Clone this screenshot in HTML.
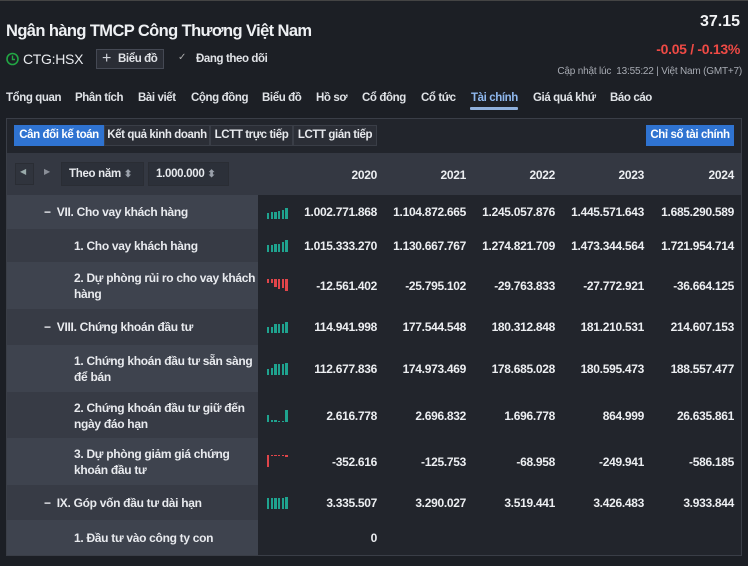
<!DOCTYPE html>
<html><head><meta charset="utf-8"><style>
*{margin:0;padding:0;box-sizing:border-box}
body{width:748px;height:566px;background:#1c1f25;font-family:"Liberation Sans",sans-serif;color:#e6e8ec;position:relative;overflow:hidden;font-size:12px}
.a{position:absolute;white-space:nowrap}
.b{font-weight:bold}
.tab{position:absolute;top:92px;font-size:11.5px;font-weight:bold;color:#dfe2e6;letter-spacing:-0.4px}
.panel{position:absolute;left:6px;top:118px;width:736px;height:438px;border:1px solid #3a3e47;background:#22252c}
.btn{position:absolute;top:125px;height:21px;line-height:19px;font-size:11.5px;font-weight:bold;text-align:center;letter-spacing:-0.4px;border:1px solid #3a3e47;background:#2b2e36;color:#e6e8ec;white-space:nowrap;overflow:hidden}
.row{position:absolute;left:7px;width:734px}
.lab{position:absolute;left:0;top:0;bottom:0;width:251px;font-size:12px;font-weight:bold;color:#e8eaee;line-height:16px;letter-spacing:-0.3px}
.v{position:absolute;font-size:12px;font-weight:bold;color:#eceef1;text-align:right;width:110px;letter-spacing:-0.3px}
.ch{position:absolute;left:260px;display:flex;align-items:flex-end;gap:1.3px;height:12px}
.ch i{display:block;width:2.4px;background:#1fa38f}
.ch.r{align-items:flex-start}
.ch.r i{background:#e0454a}
</style></head><body>
<div style="position:absolute;left:0;top:0;width:748px;height:1px;background:#444"></div>
<div class="a b" style="left:6px;top:22px;font-size:16.5px;color:#eef0f3;letter-spacing:-0.6px">Ngân hàng TMCP Công Thương Việt Nam</div>
<div class="a b" style="right:8px;top:13px;font-size:16px;color:#f2f3f5">37.15</div>
<div class="a b" style="right:8px;top:41px;font-size:14px;color:#ef4a45;letter-spacing:-0.3px">-0.05 / -0.13%</div>
<div class="a" style="right:6px;top:66px;font-size:10px;color:#a7abb3;letter-spacing:-0.2px">Cập nhật lúc&nbsp; 13:55:22 | Việt Nam (GMT+7)</div>
<svg class="a" style="left:6px;top:52px" width="13" height="14" viewBox="0 0 13 14"><circle cx="6.5" cy="7" r="5.5" fill="none" stroke="#22a644" stroke-width="1.6"/><path d="M6.5 3.5V7.5H9" stroke="#22a644" stroke-width="1.4" fill="none"/></svg>
<div class="a" style="left:23px;top:51px;font-size:14px;color:#e8eaee;letter-spacing:-0.3px">CTG:HSX</div>
<div class="a" style="left:96px;top:49px;width:68px;height:20px;border:1px solid #454954;background:#2a2d35"></div>
<div class="a" style="left:102px;top:49px;font-size:16px;color:#cfd2d8;line-height:19px">+</div>
<div class="a b" style="left:118px;top:53px;font-size:11.5px;color:#e0e2e6;letter-spacing:-0.4px">Biểu đồ</div>
<div class="a" style="left:178px;top:52px;font-size:10px;color:#aaa">✓</div>
<div class="a b" style="left:196px;top:53px;font-size:11.5px;color:#e0e2e6;letter-spacing:-0.4px">Đang theo dõi</div>

<div class="tab" style="left:6px">Tổng quan</div>
<div class="tab" style="left:75px">Phân tích</div>
<div class="tab" style="left:138px">Bài viết</div>
<div class="tab" style="left:191px">Cộng đồng</div>
<div class="tab" style="left:262px">Biểu đồ</div>
<div class="tab" style="left:316px">Hồ sơ</div>
<div class="tab" style="left:362px">Cổ đông</div>
<div class="tab" style="left:421px">Cổ tức</div>
<div class="tab" style="left:471px;color:#8fb8ee">Tài chính</div>
<div class="a" style="left:470px;top:107px;width:48px;height:3px;background:#8fb0dd;border-radius:1px"></div>
<div class="tab" style="left:533px">Giá quá khứ</div>
<div class="tab" style="left:610px">Báo cáo</div>

<div class="panel"></div>
<div class="btn" style="left:14px;width:90px;background:#2f73d1;border-color:#2f73d1;color:#fff">Cân đối kế toán</div>
<div class="btn" style="left:104px;width:106px">Kết quả kinh doanh</div>
<div class="btn" style="left:210px;width:83px">LCTT trực tiếp</div>
<div class="btn" style="left:293px;width:84px">LCTT gián tiếp</div>
<div class="btn" style="left:646px;width:88px;background:#2f73d1;border-color:#2f73d1;color:#fff">Chỉ số tài chính</div>

<div class="a" style="left:7px;top:153px;width:734px;height:42px;background:#343842"></div>
<div class="a" style="left:15px;top:163px;width:19px;height:22px;border:1px solid #2a2d34;background:#30343d"></div>
<div class="a" style="left:20px;top:167px;font-size:8px;color:#9aa">◀</div>
<div class="a" style="left:44px;top:167px;font-size:8px;color:#8a8f98">▶</div>
<div class="a" style="left:61px;top:162px;width:83px;height:24px;border:1px solid #2a2d34;background:#2c3039"></div>
<div class="a b" style="left:69px;top:168px;font-size:11.5px;letter-spacing:-0.3px">Theo năm <span style="color:#9aa0aa;font-size:10px">⬍</span></div>
<div class="a" style="left:148px;top:162px;width:81px;height:24px;border:1px solid #2a2d34;background:#2c3039"></div>
<div class="a b" style="left:156px;top:168px;font-size:11.5px;letter-spacing:-0.3px">1.000.000 <span style="color:#9aa0aa;font-size:10px">⬍</span></div>
<div class="v" style="left:267px;top:168px">2020</div>
<div class="v" style="left:356px;top:168px">2021</div>
<div class="v" style="left:445px;top:168px">2022</div>
<div class="v" style="left:534px;top:168px">2023</div>
<div class="v" style="left:624px;top:168px">2024</div>

<div class="row" style="top:195px;height:34px"><div class="lab" style="background:#3e434e;padding:9px 0 0 37px">−&nbsp; VII. Cho vay khách hàng</div></div>
<div class="row" style="top:229px;height:33px"><div class="lab" style="background:#373b45;padding:9px 0 0 67px">1. Cho vay khách hàng</div></div>
<div class="row" style="top:262px;height:47px"><div class="lab" style="background:#3e434e;padding:8px 0 0 67px;white-space:normal">2. Dự phòng rủi ro cho vay khách<br>hàng</div></div>
<div class="row" style="top:309px;height:36px"><div class="lab" style="background:#373b45;padding:10px 0 0 37px">−&nbsp; VIII. Chứng khoán đầu tư</div></div>
<div class="row" style="top:345px;height:47px"><div class="lab" style="background:#3e434e;padding:8px 4px 0 67px;white-space:normal">1. Chứng khoán đầu tư sẵn sàng để bán</div></div>
<div class="row" style="top:392px;height:46px"><div class="lab" style="background:#373b45;padding:8px 4px 0 67px;white-space:normal">2. Chứng khoán đầu tư giữ đến ngày đáo hạn</div></div>
<div class="row" style="top:438px;height:47px"><div class="lab" style="background:#3e434e;padding:8px 20px 0 67px;white-space:normal">3. Dự phòng giảm giá chứng khoán đầu tư</div></div>
<div class="row" style="top:485px;height:35px"><div class="lab" style="background:#373b45;padding:10px 0 0 37px">−&nbsp; IX. Góp vốn đầu tư dài hạn</div></div>
<div class="row" style="top:520px;height:35px"><div class="lab" style="background:#3e434e;padding:10px 0 0 67px">1. Đầu tư vào công ty con</div></div>

<div class="ch" style="top:207px;left:267px"><i style="height:6px"></i><i style="height:7px"></i><i style="height:7px"></i><i style="height:8px"></i><i style="height:9px"></i><i style="height:11px"></i></div>
<div class="ch" style="top:240px;left:267px"><i style="height:7px"></i><i style="height:7px"></i><i style="height:8px"></i><i style="height:8px"></i><i style="height:10px"></i><i style="height:12px"></i></div>
<div class="ch r" style="top:279px;left:267px"><i style="height:4px"></i><i style="height:4px"></i><i style="height:8px"></i><i style="height:10px"></i><i style="height:9px"></i><i style="height:12px"></i></div>
<div class="ch" style="top:321px;left:267px"><i style="height:6px"></i><i style="height:6px"></i><i style="height:9px"></i><i style="height:9px"></i><i style="height:9px"></i><i style="height:11px"></i></div>
<div class="ch" style="top:363px;left:267px"><i style="height:6px"></i><i style="height:7px"></i><i style="height:11px"></i><i style="height:11px"></i><i style="height:11px"></i><i style="height:12px"></i></div>
<div class="ch" style="top:410px;left:267px"><i style="height:7px"></i><i style="height:2px"></i><i style="height:2px"></i><i style="height:1px"></i><i style="height:1px"></i><i style="height:12px"></i></div>
<div class="ch r" style="top:455px;left:267px"><i style="height:12px"></i><i style="height:1px"></i><i style="height:1px"></i><i style="height:1px"></i><i style="height:1px"></i><i style="height:2px"></i></div>
<div class="ch" style="top:497px;left:267px"><i style="height:11px"></i><i style="height:11px"></i><i style="height:11px"></i><i style="height:11px"></i><i style="height:11px"></i><i style="height:12px"></i></div>

<div class="v" style="left:267px;top:205px">1.002.771.868</div><div class="v" style="left:356px;top:205px">1.104.872.665</div><div class="v" style="left:445px;top:205px">1.245.057.876</div><div class="v" style="left:534px;top:205px">1.445.571.643</div><div class="v" style="left:624px;top:205px">1.685.290.589</div>
<div class="v" style="left:267px;top:239px">1.015.333.270</div><div class="v" style="left:356px;top:239px">1.130.667.767</div><div class="v" style="left:445px;top:239px">1.274.821.709</div><div class="v" style="left:534px;top:239px">1.473.344.564</div><div class="v" style="left:624px;top:239px">1.721.954.714</div>
<div class="v" style="left:267px;top:279px">-12.561.402</div><div class="v" style="left:356px;top:279px">-25.795.102</div><div class="v" style="left:445px;top:279px">-29.763.833</div><div class="v" style="left:534px;top:279px">-27.772.921</div><div class="v" style="left:624px;top:279px">-36.664.125</div>
<div class="v" style="left:267px;top:320px">114.941.998</div><div class="v" style="left:356px;top:320px">177.544.548</div><div class="v" style="left:445px;top:320px">180.312.848</div><div class="v" style="left:534px;top:320px">181.210.531</div><div class="v" style="left:624px;top:320px">214.607.153</div>
<div class="v" style="left:267px;top:362px">112.677.836</div><div class="v" style="left:356px;top:362px">174.973.469</div><div class="v" style="left:445px;top:362px">178.685.028</div><div class="v" style="left:534px;top:362px">180.595.473</div><div class="v" style="left:624px;top:362px">188.557.477</div>
<div class="v" style="left:267px;top:409px">2.616.778</div><div class="v" style="left:356px;top:409px">2.696.832</div><div class="v" style="left:445px;top:409px">1.696.778</div><div class="v" style="left:534px;top:409px">864.999</div><div class="v" style="left:624px;top:409px">26.635.861</div>
<div class="v" style="left:267px;top:455px">-352.616</div><div class="v" style="left:356px;top:455px">-125.753</div><div class="v" style="left:445px;top:455px">-68.958</div><div class="v" style="left:534px;top:455px">-249.941</div><div class="v" style="left:624px;top:455px">-586.185</div>
<div class="v" style="left:267px;top:496px">3.335.507</div><div class="v" style="left:356px;top:496px">3.290.027</div><div class="v" style="left:445px;top:496px">3.519.441</div><div class="v" style="left:534px;top:496px">3.426.483</div><div class="v" style="left:624px;top:496px">3.933.844</div>
<div class="v" style="left:267px;top:531px">0</div>
</body></html>
